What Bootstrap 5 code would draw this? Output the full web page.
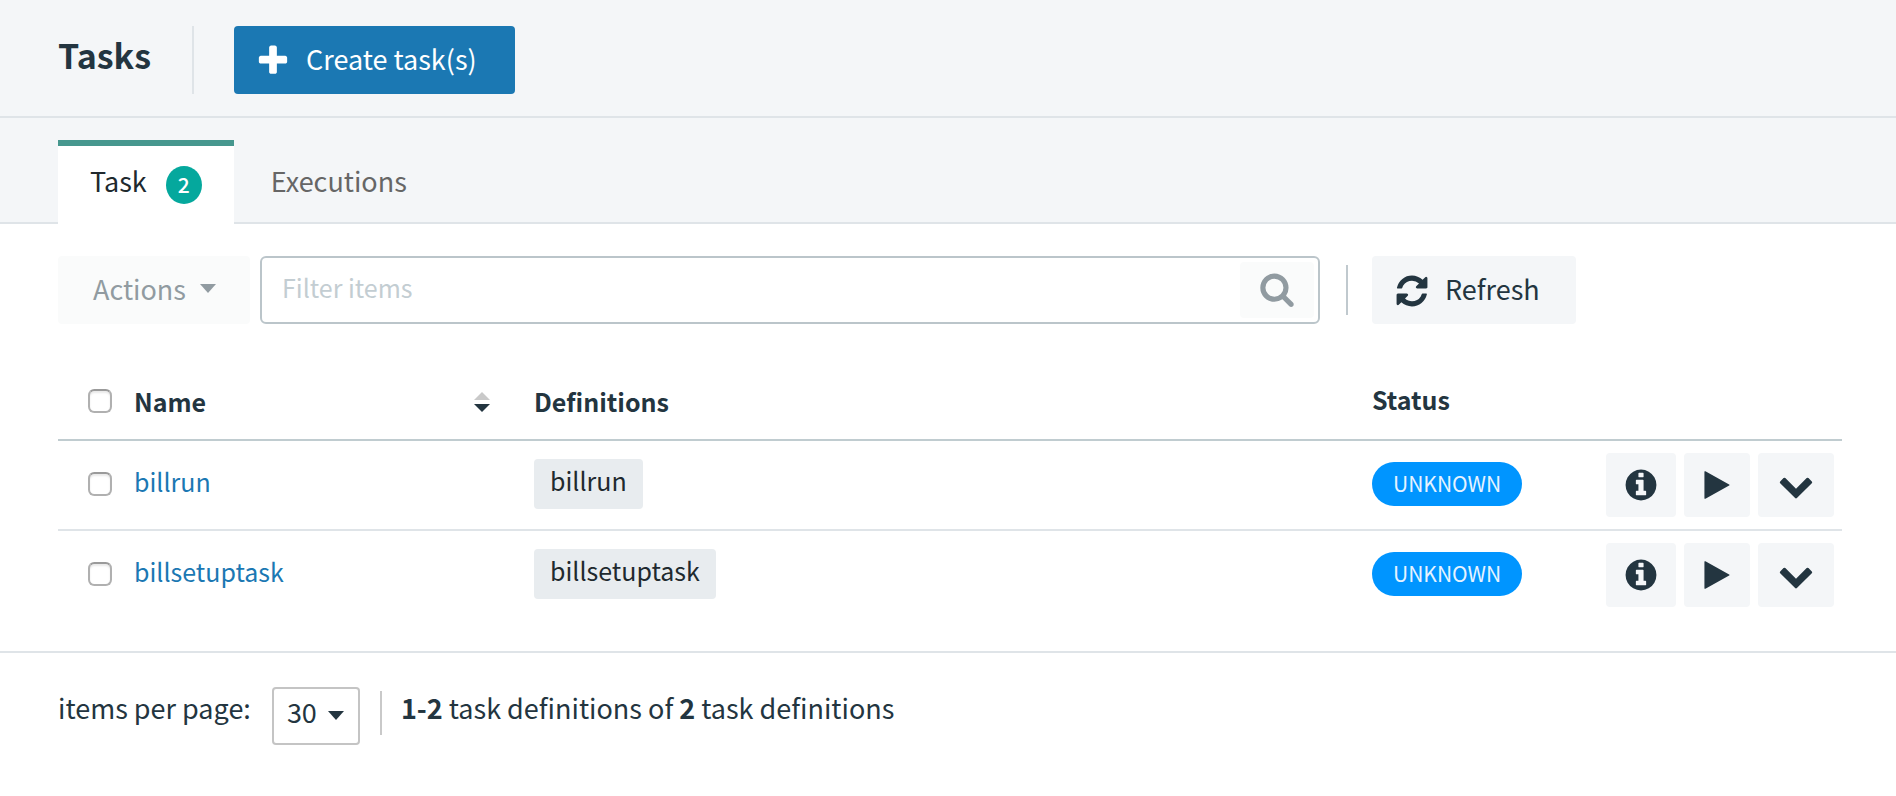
<!DOCTYPE html>
<html lang="en">
<head>
<meta charset="utf-8">
<meta name="viewport" content="width=device-width, initial-scale=1">
<title>Tasks</title>
<link href="https://cdn.jsdelivr.net/npm/bootstrap@5.3.0/dist/css/bootstrap.min.css" rel="stylesheet">
<style>
  :root { --ink: #233540; --line: #dfe4e8; --line-strong: #c0c9ce; --soft: #f4f6f8; --brand: #1b78b3; }
  body { font-family: "Noto Sans CJK SC", "Open Sans", sans-serif; font-size: 27px; line-height: 36px; color: var(--ink); background: #fff; }
  .gutter { padding-left: 58px; padding-right: 54px; }
  .ico { width: 36px; height: 36px; fill: currentColor; flex: none; display: block; }
  .ico-sm { width: 32px; height: 32px; }
  .btn { --bs-btn-font-size: 27px; --bs-btn-line-height: 36px; --bs-btn-border-radius: 4px; --bs-btn-border-width: 0px; --bs-btn-padding-y: 0px; }

  .page-head { background: var(--soft); border-bottom: 2px solid var(--line); padding-top: 26px; padding-bottom: 22px; }
  .page-head h1 { font-size: 34px; line-height: 44px; font-weight: 700; margin: 0; padding: 7px 41px 17px 0; border-right: 2px solid var(--line); }
  .btn-create { --bs-btn-color: #fff; --bs-btn-bg: var(--brand); --bs-btn-hover-color: #fff; --bs-btn-hover-bg: #16669a; min-height: 68px; padding-left: 21px; padding-right: 38px; margin-left: 40px; }

  .tab-strip { background: var(--soft); border-bottom: 2px solid var(--line); padding-top: 22px; }
  .tab-strip .nav-tabs { border: 0; margin-bottom: -2px; }
  .tab-strip .nav-link { border: 0; border-top: 6px solid transparent; border-radius: 0; margin: 0; padding: 17px 32px 21px; color: #666; height: 84px; }
  .tab-strip .nav-item + .nav-item .nav-link { padding-left: 37px; }
  .tab-strip .nav-link.active { background: #fff; color: #20292e; border-top-color: #46978e; }
  .tab-count { width: 36px; height: 38px; background: #05a89d; color: #fff; font-size: 21px; line-height: 36px; font-weight: 500; padding: 0; margin: 3px 0 0 19px; }

  .toolbar { padding-top: 32px; }
  .btn-quiet { --bs-btn-color: #919ba1; --bs-btn-bg: #fafbfb; --bs-btn-disabled-color: #919ba1; --bs-btn-disabled-bg: #fafbfb; --bs-btn-disabled-opacity: 1; }
  .btn-actions { min-height: 68px; padding-left: 35px; padding-right: 34px; }
  .caret { width: 16px; height: 10px; fill: currentColor; margin-left: 14px; }
  .filter { border: 2px solid #bbc5ca; border-radius: 6px; height: 68px; padding: 4px; margin-left: 10px; }
  .filter .form-control { border: 0; box-shadow: none; font-size: 25px; line-height: 36px; padding: 6px 16px 12px; color: var(--ink); background: transparent; }
  .filter .form-control::placeholder { color: #c3cdd2; opacity: 1; }
  .btn-find { width: 74px; padding: 0 19px 2px; }
  .side { flex: 0 0 470px; }
  .rule { width: 2px; background: var(--line-strong); }
  .rule-tool { height: 50px; margin: 0 24px 0 26px; }
  .btn-soft { --bs-btn-color: var(--ink); --bs-btn-bg: var(--soft); --bs-btn-hover-color: var(--ink); --bs-btn-hover-bg: #e7ebee; }
  .btn-refresh { min-height: 68px; padding-left: 22px; padding-right: 36px; }
  .btn-create, .btn-actions, .btn-refresh { padding-bottom: 2px; }
  .btn-create .ico, .btn-refresh .ico { margin-right: 15px; margin-top: 3px; }

  .task-table { table-layout: fixed; margin: 34px 0 32px; --bs-table-color: var(--ink); --bs-table-bg: transparent; color: var(--ink); font-size: 25px; }
  .task-table > :not(caption) > * > * { padding: 0; border-bottom: 2px solid var(--line); vertical-align: middle; box-shadow: none; }
  .task-table > thead > tr > * { height: 82px; font-weight: 700; border-bottom-color: #c0ccd0; padding-top: 4px; }
  .task-table > thead > tr > .th-plain { padding-top: 0; }
  .task-table > tbody > tr > td { height: 90px; }
  .task-table > tbody > tr:last-child > td { border-bottom: 0; height: 89px; }
  .col-check { width: 76px; } .col-name { width: 400px; } .col-status { width: 234px; } .col-act { width: 236px; }
  .tick { width: 24px; height: 24px; margin: 0 0 0 30px; display: block; border: 2px solid #b0b0b0; border-top-color: #9a9a9a; border-radius: 6px; box-shadow: inset 0 2px 2px #e9e9e9; float: none; }
  tbody .tick { margin-bottom: 3px; }
  .sort { border: 0; background: none; padding: 3px 0 0; margin-right: 44px; }
  .sort svg { width: 16px; height: 20px; display: block; }
  .task-link { color: var(--brand); text-decoration: none; display: inline-block; padding-bottom: 9px; }
  .task-link:hover { text-decoration: underline; }
  .chip { display: inline-block; vertical-align: middle; background: #e8ecef; color: #20292e; border-radius: 4px; padding: 3px 16px 11px; margin-top: -2px; }
  .state { background: #0095ff; color: #e6f3ff; border-radius: 22px; font-size: 21px; line-height: 32px; font-weight: 400; padding: 5px 21px 7px; display: inline-block; vertical-align: middle; margin-top: -5px; }
  .btn-row { height: 64px; padding-left: 0; padding-right: 0; }
  .w-info { width: 70px; } .w-play { width: 66px; } .w-more { width: 76px; }

  .pager { border-top: 2px solid var(--line); padding-top: 34px; padding-bottom: 40px; }
  .pager-text { padding-top: 3px; }
  .pager .form-select { width: 88px; height: 58px; margin-left: 21px; padding: 0 32px 8px 13px; border: 2px solid #c4c4c4; border-radius: 4px; font-size: 27px; line-height: 36px; color: var(--ink); background-size: 16px 9px; background-position: right 14px top 22px;
    background-image: url("data:image/svg+xml,%3csvg xmlns='http://www.w3.org/2000/svg' viewBox='0 0 16 9'%3e%3cpath d='M0 0h16L8 9z' fill='%23233540'/%3e%3c/svg%3e"); }
  .rule-page { height: 44px; margin: 4px 19px 0 20px; background: #c9c9c9; }
</style>
</head>
<body>
<svg class="d-none" xmlns="http://www.w3.org/2000/svg">
  <symbol id="i-plus" viewBox="0 0 1792 1792"><path d="M1600 736v192q0 40-28 68t-68 28h-416v416q0 40-28 68t-68 28h-192q-40 0-68-28t-28-68v-416h-416q-40 0-68-28t-28-68v-192q0-40 28-68t68-28h416v-416q0-40 28-68t68-28h192q40 0 68 28t28 68v416h416q40 0 68 28t28 68z"/></symbol>
  <symbol id="i-search" viewBox="0 0 1792 1792"><path d="M1216 832q0-185-131.500-316.500t-316.500-131.500-316.500 131.500-131.500 316.500 131.500 316.500 316.500 131.500 316.500-131.500 131.500-316.500zm512 832q0 52-38 90t-90 38q-54 0-90-38l-343-342q-179 124-399 124-143 0-273.500-55.500t-225-150-150-225-55.500-273.500 55.500-273.500 150-225 225-150 273.500-55.500 273.500 55.500 225 150 150 225 55.500 273.500q0 220-124 399l343 343q37 37 37 90z"/></symbol>
  <symbol id="i-refresh" viewBox="0 0 1792 1792"><path d="M1639 1056q0 5-1 7-64 268-268 434.500t-478 166.500q-146 0-282.500-55t-243.500-157l-129 129q-19 19-45 19t-45-19-19-45v-448q0-26 19-45t45-19h448q26 0 45 19t19 45-19 45l-137 137q71 66 161 102t187 36q134 0 250-65t186-179q11-17 53-117 8-23 30-23h192q13 0 22.500 9.500t9.500 22.500zm25-800v448q0 26-19 45t-45 19h-448q-26 0-45-19t-19-45 19-45l138-138q-148-137-349-137-134 0-250 65t-186 179q-11 17-53 117-8 23-30 23h-199q-13 0-22.500-9.500t-9.500-22.500v-7q65-268 270-434.500t480-166.500q146 0 284 55.500t245 156.500l130-129q19-19 45-19t45 19 19 45z"/></symbol>
  <symbol id="i-info" viewBox="0 0 1792 1792"><path d="M1152 1376v-160q0-14-9-23t-23-9h-96v-512q0-14-9-23t-23-9h-320q-14 0-23 9t-9 23v160q0 14 9 23t23 9h96v320h-96q-14 0-23 9t-9 23v160q0 14 9 23t23 9h448q14 0 23-9t9-23zm-128-896v-160q0-14-9-23t-23-9h-192q-14 0-23 9t-9 23v160q0 14 9 23t23 9h192q14 0 23-9t9-23zm640 416q0 209-103 385.500t-279.500 279.500-385.500 103-385.500-103-279.500-279.500-103-385.500 103-385.500 279.500-279.500 385.500-103 385.500 103 279.500 279.500 103 385.500z"/></symbol>
  <symbol id="i-play" viewBox="0 0 1792 1792"><path d="M1576 927l-1328 738q-23 13-39.500 3t-16.500-36v-1472q0-26 16.500-36t39.500 3l1328 738q23 13 23 31t-23 31z"/></symbol>
  <symbol id="i-down" viewBox="0 0 1792 1792"><path d="M1683 808l-742 741q-19 19-45 19t-45-19l-742-741q-19-19-19-45.500t19-45.500l166-165q19-19 45-19t45 19l531 531 531-531q19-19 45-19t45 19l166 165q19 19 19 45.500t-19 45.500z"/></symbol>
</svg>

<header class="page-head gutter d-flex">
  <h1>Tasks</h1>
  <button type="button" class="btn btn-create d-flex align-items-center"><svg class="ico" aria-hidden="true"><use href="#i-plus"/></svg>Create task(s)</button>
</header>

<nav class="tab-strip gutter">
  <ul class="nav nav-tabs">
    <li class="nav-item"><a class="nav-link active d-flex align-items-start" href="#task" aria-current="page">Task<span class="badge rounded-circle tab-count">2</span></a></li>
    <li class="nav-item"><a class="nav-link" href="#executions">Executions</a></li>
  </ul>
</nav>

<main>
  <div class="gutter">
    <div class="toolbar d-flex">
      <button type="button" class="btn btn-quiet btn-actions d-flex align-items-center" disabled>Actions<svg class="caret" viewBox="0 0 16 10" aria-hidden="true"><path d="M0 0h16L8 9z"/></svg></button>
      <form class="filter d-flex flex-grow-1">
        <input type="text" class="form-control flex-grow-1" placeholder="Filter items" aria-label="Filter items">
        <button type="submit" class="btn btn-quiet btn-find" aria-label="Search" disabled><svg class="ico" aria-hidden="true"><use href="#i-search"/></svg></button>
      </form>
      <div class="rule rule-tool align-self-center"></div>
      <div class="side">
        <button type="button" class="btn btn-soft btn-refresh d-flex align-items-center"><svg class="ico" aria-hidden="true"><use href="#i-refresh"/></svg>Refresh</button>
      </div>
    </div>

    <table class="table task-table">
      <colgroup><col class="col-check"><col class="col-name"><col><col class="col-status"><col class="col-act"></colgroup>
      <thead>
        <tr>
          <th><input type="checkbox" class="form-check-input tick" aria-label="Select all tasks"></th>
          <th><div class="d-flex align-items-center justify-content-between">Name<button type="button" class="sort" aria-label="Sort by name"><svg viewBox="0 0 16 20"><path d="M0 8L8 0l8 8z" fill="#c9c9c9"/><path d="M0 12h16l-8 8z" fill="#233540"/></svg></button></div></th>
          <th>Definitions</th>
          <th class="th-plain">Status</th>
          <td></td>
        </tr>
      </thead>
      <tbody>
        <tr>
          <td><input type="checkbox" class="form-check-input tick" aria-label="Select billrun"></td>
          <td><a class="task-link" href="#billrun">billrun</a></td>
          <td><span class="chip">billrun</span></td>
          <td><span class="state">UNKNOWN</span></td>
          <td><div class="d-flex gap-2">
            <button type="button" class="btn btn-soft btn-row w-info d-flex align-items-center justify-content-center" aria-label="Info"><svg class="ico"><use href="#i-info"/></svg></button>
            <button type="button" class="btn btn-soft btn-row w-play d-flex align-items-center justify-content-center" aria-label="Launch"><svg class="ico ico-sm"><use href="#i-play"/></svg></button>
            <button type="button" class="btn btn-soft btn-row w-more d-flex align-items-center justify-content-center" aria-label="More"><svg class="ico"><use href="#i-down"/></svg></button>
          </div></td>
        </tr>
        <tr>
          <td><input type="checkbox" class="form-check-input tick" aria-label="Select billsetuptask"></td>
          <td><a class="task-link" href="#billsetuptask">billsetuptask</a></td>
          <td><span class="chip">billsetuptask</span></td>
          <td><span class="state">UNKNOWN</span></td>
          <td><div class="d-flex gap-2">
            <button type="button" class="btn btn-soft btn-row w-info d-flex align-items-center justify-content-center" aria-label="Info"><svg class="ico"><use href="#i-info"/></svg></button>
            <button type="button" class="btn btn-soft btn-row w-play d-flex align-items-center justify-content-center" aria-label="Launch"><svg class="ico ico-sm"><use href="#i-play"/></svg></button>
            <button type="button" class="btn btn-soft btn-row w-more d-flex align-items-center justify-content-center" aria-label="More"><svg class="ico"><use href="#i-down"/></svg></button>
          </div></td>
        </tr>
      </tbody>
    </table>
  </div>

  <footer class="pager gutter d-flex align-items-start">
    <label class="pager-text" for="page-size">items per page:</label>
    <select id="page-size" class="form-select"><option>30</option><option>50</option><option>100</option></select>
    <div class="rule rule-page"></div>
    <div class="pager-text"><strong>1-2</strong> task definitions of <strong>2</strong> task definitions</div>
  </footer>
</main>
<script src="https://cdn.jsdelivr.net/npm/bootstrap@5.3.0/dist/js/bootstrap.bundle.min.js"></script>
</body>
</html>
